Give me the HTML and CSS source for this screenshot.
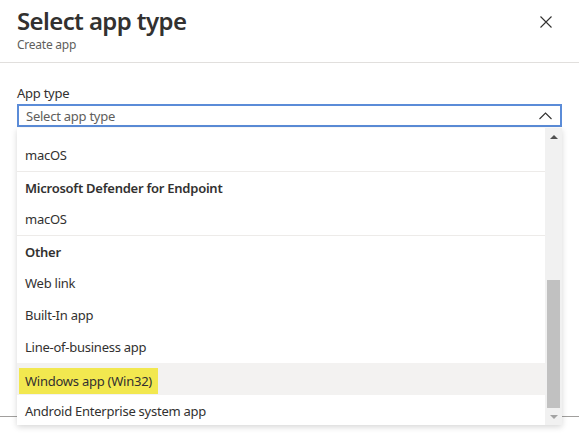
FILE: index.html
```html
<!DOCTYPE html>
<html>
<head>
    <title>Select app type</title>
    <meta charset="UTF-8">
    <meta name="viewport" content="width=device-width, initial-scale=1.0">
<link rel="stylesheet" href="styles.css">
</head>
<body>

<div class="page">
    <header class="header">
        <div class="header-text">
            <h1 class="header-title">Select app type</h1>
            <div class="header-sub">Create app</div>
        </div>
        <div class="header-close">
            <svg width="12" height="12" viewBox="0 0 12 12">
                <path d="M0.5 0.5 L11.5 11.5 M11.5 0.5 L0.5 11.5" stroke="#323130" stroke-width="1.1" fill="none"/>
            </svg>
        </div>
    </header>

    <main class="main">
        <label class="field-label">App type</label>
        <div class="select">
            <div class="select-box">
                <span class="select-placeholder">Select app type</span>
                <svg class="select-chevron" width="13" height="8" viewBox="0 0 13 8">
                    <path d="M0.5 7 L6.5 1 L12.5 7" stroke="#323130" stroke-width="1.1" fill="none"/>
                </svg>
            </div>

            <div class="dropdown">
                <div class="dropdown-options">
                    <div class="option">macOS</div>
                    <div class="option group">Microsoft Defender for Endpoint</div>
                    <div class="option">macOS</div>
                    <div class="option group">Other</div>
                    <div class="option">Web link</div>
                    <div class="option">Built-In app</div>
                    <div class="option">Line-of-business app</div>
                    <div class="option hover"><span class="mark">Windows app (Win32)</span></div>
                    <div class="option">Android Enterprise system app</div>
                </div>
                <div class="scrollbar">
                    <div class="scrollbar-btn"><span class="arrow-up"></span></div>
                    <div class="scrollbar-track">
                        <div class="scrollbar-thumb"></div>
                    </div>
                    <div class="scrollbar-btn"><span class="arrow-down"></span></div>
                </div>
            </div>
        </div>
    </main>

    <footer class="footer"></footer>
</div>

</body>
</html>
```

FILE: styles.css
```css
/* page */
    body{
        padding:0;
        margin:0;
        background-color:#fff;
        color:#323130;
        font:normal 13px "Noto Sans", "Open Sans", sans-serif;
        letter-spacing:-0.25px;
    }
    .page{
        display:flex;
        flex-direction:column;
        width:579px;
        height:433px;
        overflow:hidden;
    }
/* header */
    .header{
        display:flex;
        justify-content:space-between;
        align-items:flex-start;
        height:62px;
        padding:0 27px 0 17px;
        border-bottom:1px solid #e1dfdd;
    }
    .header-title{
        margin:5px 0 0 0;
        font-size:24px;
        font-weight:600;
        line-height:32px;
        letter-spacing:-0.6px;
    }
    .header-sub{
        font-size:12px;
        line-height:16px;
        color:#605e5c;
    }
    .header-close{
        padding-top:16px;
        line-height:0;
    }
/* main */
    .main{
        flex:1;
        padding:22px 17px 0 17px;
    }
    .field-label{
        display:block;
        height:19px;
        line-height:17px;
    }
    .select{
        position:relative;
    }
    .select-box{
        display:flex;
        justify-content:space-between;
        align-items:center;
        height:19px;
        padding:0 8px 0 7px;
        border:2px solid #5b8cd8;
    }
    .select-placeholder{
        color:#605e5c;
    }
/* dropdown */
    .dropdown{
        position:absolute;
        top:24px;
        left:0;
        z-index:10;
        display:flex;
        width:545px;
        height:297px;
        background-color:#fff;
        box-shadow:0 2px 6px rgba(0,0,0,.16);
        overflow:hidden;
    }
    .dropdown-options{
        flex:1;
        padding-top:11px;
    }
    .option{
        height:32px;
        line-height:32px;
        padding:0 8px;
        box-sizing:border-box;
        white-space:nowrap;
    }
    .option.group{
        font-weight:600;
        border-top:1px solid #edebe9;
        line-height:32px;
    }
    .option.hover{
        background-color:#f3f2f1;
        padding-top:5px;
        line-height:26px;
    }
    .option .mark{
        display:inline-block;
        margin-left:-6px;
        padding:0 6px;
        background-color:#f2e84f;
    }
/* scrollbar */
    .scrollbar{
        display:flex;
        flex-direction:column;
        width:17px;
        background-color:#f1f1f1;
    }
    .scrollbar-btn{
        display:flex;
        justify-content:center;
        align-items:center;
        height:17px;
    }
    .arrow-up{
        border-left:4px solid transparent;
        border-right:4px solid transparent;
        border-bottom:4px solid #505050;
    }
    .arrow-down{
        border-left:4px solid transparent;
        border-right:4px solid transparent;
        border-top:4px solid #a3a3a3;
    }
    .scrollbar-track{
        flex:1;
        padding:135px 2px 0 2px;
    }
    .scrollbar-thumb{
        height:128px;
        background-color:#c1c1c1;
    }
/* footer */
    .footer{
        height:16px;
        border-top:1px solid #a19f9d;
    }
```
